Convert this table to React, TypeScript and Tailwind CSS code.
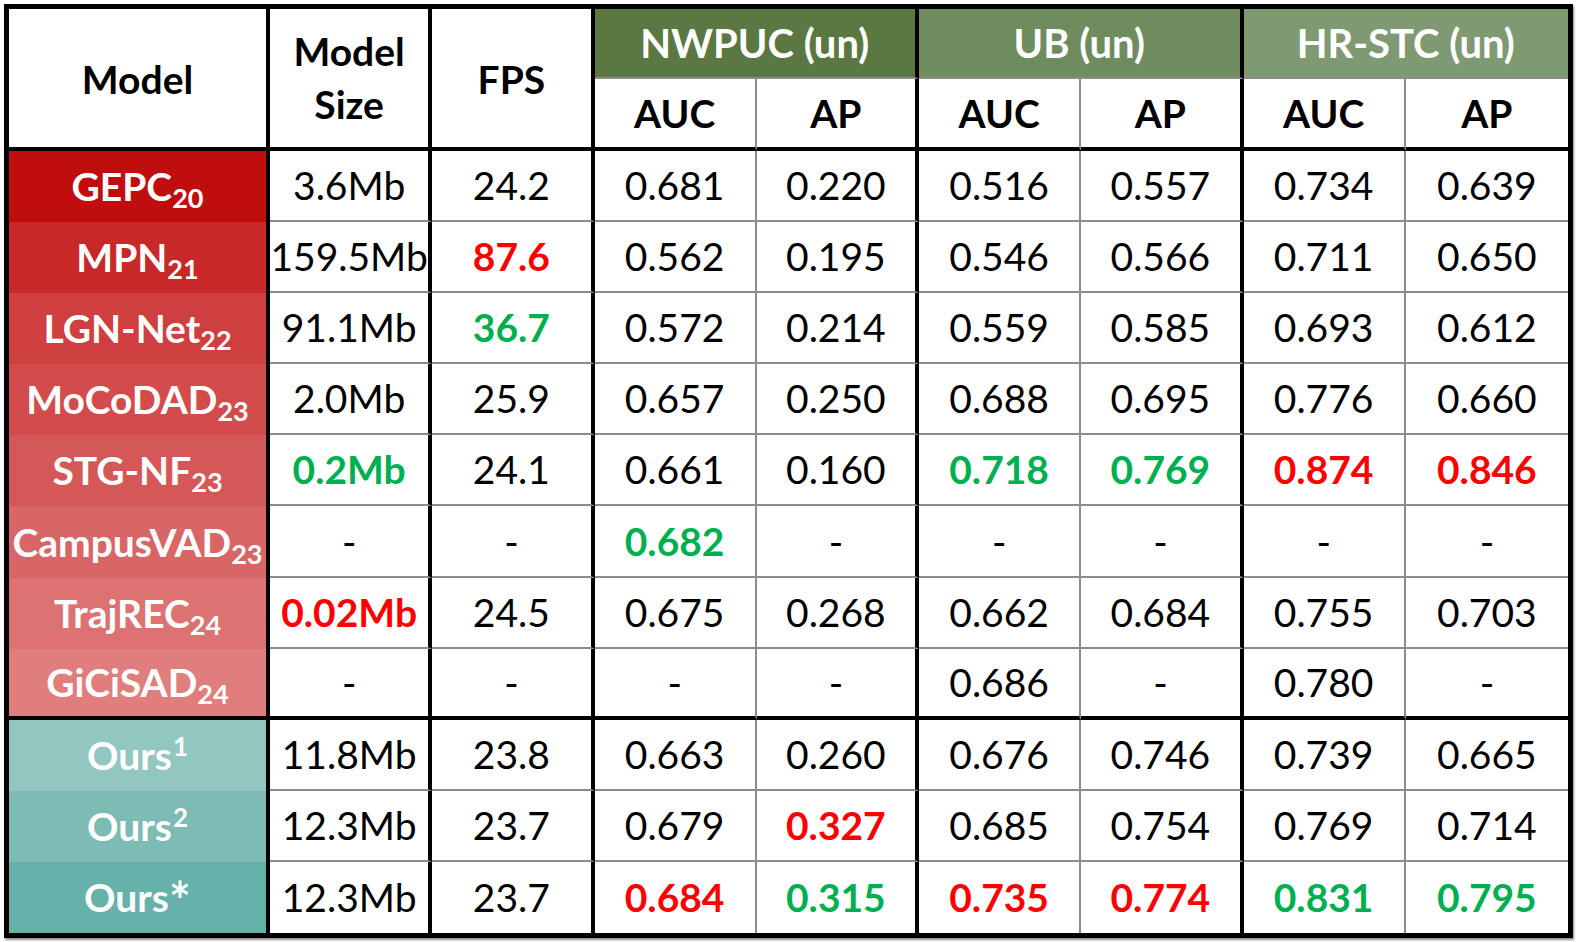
import React from 'react';

type Tone = 'k' | 'r' | 'g';
type Val = [string, Tone?];

interface Row {
  name: string;
  sub?: string;
  sup?: string;
  bg: string;
  vals: Val[];
}

const rows: Row[] = [
  { name: 'GEPC', sub: '20', bg: 'bg-[#c00e0e]', vals: [['3.6Mb'], ['24.2'], ['0.681'], ['0.220'], ['0.516'], ['0.557'], ['0.734'], ['0.639']] },
  { name: 'MPN', sub: '21', bg: 'bg-[#c92828]', vals: [['159.5Mb'], ['87.6', 'r'], ['0.562'], ['0.195'], ['0.546'], ['0.566'], ['0.711'], ['0.650']] },
  { name: 'LGN-Net', sub: '22', bg: 'bg-[#cf3f3f]', vals: [['91.1Mb'], ['36.7', 'g'], ['0.572'], ['0.214'], ['0.559'], ['0.585'], ['0.693'], ['0.612']] },
  { name: 'MoCoDAD', sub: '23', bg: 'bg-[#d24c4c]', vals: [['2.0Mb'], ['25.9'], ['0.657'], ['0.250'], ['0.688'], ['0.695'], ['0.776'], ['0.660']] },
  { name: 'STG-NF', sub: '23', bg: 'bg-[#d45858]', vals: [['0.2Mb', 'g'], ['24.1'], ['0.661'], ['0.160'], ['0.718', 'g'], ['0.769', 'g'], ['0.874', 'r'], ['0.846', 'r']] },
  { name: 'CampusVAD', sub: '23', bg: 'bg-[#d86666]', vals: [['-'], ['-'], ['0.682', 'g'], ['-'], ['-'], ['-'], ['-'], ['-']] },
  { name: 'TrajREC', sub: '24', bg: 'bg-[#dc7272]', vals: [['0.02Mb', 'r'], ['24.5'], ['0.675'], ['0.268'], ['0.662'], ['0.684'], ['0.755'], ['0.703']] },
  { name: 'GiCiSAD', sub: '24', bg: 'bg-[#e07e7e]', vals: [['-'], ['-'], ['-'], ['-'], ['0.686'], ['-'], ['0.780'], ['-']] },
  { name: 'Ours', sup: '1', bg: 'bg-[#92c6c0]', vals: [['11.8Mb'], ['23.8'], ['0.663'], ['0.260'], ['0.676'], ['0.746'], ['0.739'], ['0.665']] },
  { name: 'Ours', sup: '2', bg: 'bg-[#7dbbb4]', vals: [['12.3Mb'], ['23.7'], ['0.679'], ['0.327', 'r'], ['0.685'], ['0.754'], ['0.769'], ['0.714']] },
  { name: 'Ours', sup: '*', bg: 'bg-[#66b1aa]', vals: [['12.3Mb'], ['23.7'], ['0.684', 'r'], ['0.315', 'g'], ['0.735', 'r'], ['0.774', 'r'], ['0.831', 'g'], ['0.795', 'g']] },
];

// right border per data column: size, fps, then AUC/AP pairs
const rightBorder = [
  'border-r-4 border-r-black',
  'border-r-4 border-r-black',
  'border-r-2 border-r-[#8c8c8c]',
  'border-r-4 border-r-black',
  'border-r-2 border-r-[#8c8c8c]',
  'border-r-4 border-r-black',
  'border-r-2 border-r-[#8c8c8c]',
  '',
];

const toneClass: Record<Tone, string> = {
  k: 'text-black font-normal',
  r: 'text-[#ff0000] font-bold',
  g: 'text-[#00b050] font-bold',
};

const groups = [
  { label: 'NWPUC (un)', bg: 'bg-[#5b7843]', last: false },
  { label: 'UB (un)', bg: 'bg-[#6e8c5e]', last: false },
  { label: 'HR-STC (un)', bg: 'bg-[#7f9a72]', last: true },
];

function rowBottom(i: number) {
  if (i === 7) return 'border-b-4 border-b-black';
  if (i === rows.length - 1) return '';
  return 'border-b-2 border-b-[#8c8c8c]';
}

export default function App() {
  return (
    <div className="min-h-screen bg-white pl-[4px] pt-[4px] font-['Lato','Open_Sans',sans-serif]">
      <div className="inline-grid grid-cols-[261px_repeat(8,162.25px)] grid-rows-[70px_72px_repeat(11,71.1px)] border-[5px] border-black shadow-[1px_2px_2px_rgba(0,0,0,0.45)] text-[39px] leading-none">
        {/* header */}
        <div className="row-span-2 flex items-center justify-center border-r-4 border-b-4 border-black bg-white pt-[3px] font-bold text-black">
          Model
        </div>
        <div className="row-span-2 flex flex-col items-center justify-center border-r-4 border-b-4 border-black bg-white font-bold leading-[53px] text-black">
          <span>Model</span>
          <span>Size</span>
        </div>
        <div className="row-span-2 flex items-center justify-center border-r-4 border-b-4 border-black bg-white pt-[3px] font-bold text-black">
          FPS
        </div>
        {groups.map((g) => (
          <div
            key={g.label}
            className={`col-span-2 flex items-center justify-center border-b-2 border-b-[#8c8c8c] ${g.bg} text-[40px] font-bold text-white ${g.last ? '' : 'border-r-4 border-r-black'}`}
          >
            {g.label}
          </div>
        ))}
        {groups.map((g) => (
          <React.Fragment key={g.label + '-sub'}>
            <div className="flex items-center justify-center border-r-2 border-r-[#8c8c8c] border-b-4 border-b-black bg-white font-bold text-black">
              AUC
            </div>
            <div className={`flex items-center justify-center border-b-4 border-b-black bg-white font-bold text-black ${g.last ? '' : 'border-r-4 border-r-black'}`}>
              AP
            </div>
          </React.Fragment>
        ))}

        {/* body */}
        {rows.map((r, i) => (
          <React.Fragment key={i}>
            <div className={`flex items-center justify-center whitespace-nowrap border-r-4 border-r-black ${i === 7 ? 'border-b-4 border-b-black' : ''} ${r.bg} font-bold text-white`}>
              <span>{r.name}</span>
              {r.sub && <span className="relative top-[11px] text-[27px]">{r.sub}</span>}
              {r.sup && r.sup !== '*' && <span className="relative -top-[9px] pl-[1px] text-[26px]">{r.sup}</span>}
              {r.sup === '*' && <span className="relative top-[3px] text-[52px]">*</span>}
            </div>
            {r.vals.map(([v, t], j) => (
              <div
                key={j}
                className={`flex items-center justify-center whitespace-nowrap bg-white ${rightBorder[j]} ${rowBottom(i)} ${toneClass[t ?? 'k']}`}
              >
                {v}
              </div>
            ))}
          </React.Fragment>
        ))}
      </div>
    </div>
  );
}
